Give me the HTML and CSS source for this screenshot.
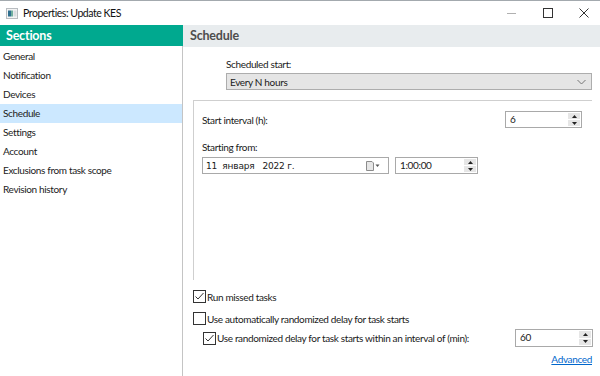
FILE: index.html
```html
<!DOCTYPE html>
<html>
<head>
<meta charset="utf-8">
<title>Properties: Update KES</title>
<link rel="stylesheet" href="styles.css">
</head>
<body>
<div class="window">
  <header class="titlebar">
    <svg class="appicon" width="12" height="11" viewBox="0 0 12 11">
      <rect x="0.5" y="0.5" width="11" height="10" fill="#f4f4f4" stroke="#b8bcc0"/>
      <rect x="2" y="2.5" width="3" height="6" fill="#2f6f8f"/>
      <rect x="5" y="2.5" width="2" height="6" fill="#6fae9e"/>
      <rect x="7.5" y="2.5" width="3" height="6" fill="#d9dde0"/>
    </svg>
    <span class="title">Properties: Update KES</span>
    <div class="controls">
      <span class="ctl"><svg width="10" height="10" viewBox="0 0 10 10"><line x1="0" y1="5.5" x2="9" y2="5.5" stroke="#b0b0b0" stroke-width="1"/></svg></span>
      <span class="ctl"><svg width="10" height="10" viewBox="0 0 10 10"><rect x="0.5" y="0.5" width="9" height="9" fill="none" stroke="#333" stroke-width="1"/></svg></span>
      <span class="ctl"><svg width="10" height="10" viewBox="0 0 10 10"><path d="M0.5 0.5 L9.5 9.5 M9.5 0.5 L0.5 9.5" stroke="#333" stroke-width="1"/></svg></span>
    </div>
  </header>
  <div class="main">
    <aside class="sidebar">
      <div class="sec-head">Sections</div>
      <ul class="nav">
        <li>General</li>
        <li>Notification</li>
        <li>Devices</li>
        <li class="active">Schedule</li>
        <li>Settings</li>
        <li>Account</li>
        <li>Exclusions from task scope</li>
        <li>Revision history</li>
      </ul>
    </aside>
    <section class="content">
      <div class="content-head">Schedule</div>
      <div class="sched">
        <div class="lbl">Scheduled start:</div>
        <div class="select">
          <span>Every N hours</span>
          <svg width="9" height="6" viewBox="0 0 9 6"><path d="M0.5 1 L4.5 5 L8.5 1" fill="none" stroke="#777" stroke-width="1"/></svg>
        </div>
      </div>
      <div class="group">
        <div class="row-between">
          <span class="lbl">Start interval (h):</span>
          <div class="spin spin-interval">
            <span class="val">6</span>
            <div class="btns">
              <span class="btn"><svg width="5" height="3" viewBox="0 0 5 3"><path d="M0 3 L2.5 0 L5 3Z" fill="#222"/></svg></span>
              <span class="btn"><svg width="5" height="3" viewBox="0 0 5 3"><path d="M0 0 L2.5 3 L5 0Z" fill="#222"/></svg></span>
            </div>
          </div>
        </div>
        <div class="lbl from">Starting from:</div>
        <div class="dt">
          <div class="date">
            <span class="val">11&nbsp;&nbsp;января&nbsp;&nbsp;&nbsp;2022&nbsp;г.</span>
            <span class="cal">
              <svg width="14" height="10" viewBox="0 0 14 10"><path d="M0.5 0.5 H6 L7.5 2 V9.5 H0.5 Z" fill="#e6e6e6" stroke="#8c8c8c"/><path d="M9.5 3.5 L11.5 6 L13.5 3.5Z" fill="#555"/></svg>
            </span>
          </div>
          <div class="spin spin-time">
            <span class="val">1:00:00</span>
            <div class="btns">
              <span class="btn"><svg width="5" height="3" viewBox="0 0 5 3"><path d="M0 3 L2.5 0 L5 3Z" fill="#222"/></svg></span>
              <span class="btn"><svg width="5" height="3" viewBox="0 0 5 3"><path d="M0 0 L2.5 3 L5 0Z" fill="#222"/></svg></span>
            </div>
          </div>
        </div>
      </div>
      <div class="checks">
        <label class="chk"><span class="box on"><svg width="11" height="11" viewBox="0 0 11 11"><path d="M1.5 5.5 L4 8 L9.5 2" fill="none" stroke="#333" stroke-width="1"/></svg></span>Run missed tasks</label>
        <label class="chk second"><span class="box"></span>Use automatically randomized delay for task starts</label>
        <div class="row-between third">
          <label class="chk"><span class="box on"><svg width="11" height="11" viewBox="0 0 11 11"><path d="M1.5 5.5 L4 8 L9.5 2" fill="none" stroke="#333" stroke-width="1"/></svg></span>Use randomized delay for task starts within an interval of (min):</label>
          <div class="spin spin-delay">
            <span class="val">60</span>
            <div class="btns">
              <span class="btn"><svg width="5" height="3" viewBox="0 0 5 3"><path d="M0 3 L2.5 0 L5 3Z" fill="#222"/></svg></span>
              <span class="btn"><svg width="5" height="3" viewBox="0 0 5 3"><path d="M0 0 L2.5 3 L5 0Z" fill="#222"/></svg></span>
            </div>
          </div>
        </div>
        <div class="adv"><a href="#">Advanced</a></div>
      </div>
    </section>
  </div>
</div>
</body>
</html>
```

FILE: styles.css
```css
* { box-sizing: border-box; }
html, body { margin: 0; padding: 0; }
body {
  width: 600px;
  height: 376px;
  overflow: hidden;
  background: #fff;
  font-family: "Lato", "Liberation Sans", sans-serif;
  font-size: 10px;
  letter-spacing: -0.35px;
  color: #1a1a1a;
}
.window { width: 600px; height: 376px; display: flex; flex-direction: column; }

.titlebar {
  height: 25px;
  border-top: 1px solid #a3a9ae;
  display: flex;
  align-items: center;
  padding-left: 6px;
  background: #fff;
}
.appicon { display: block; }
.title { margin-left: 5px; font-size: 10.5px; letter-spacing: -0.45px; color: #111; }
.controls { margin-left: auto; display: flex; height: 100%; }
.ctl { width: 36px; display: flex; align-items: center; justify-content: flex-end; padding-right: 11px; }
.ctl svg { display: block; }

.main { flex: 1; display: flex; min-height: 0; }
.sidebar { width: 183px; border-right: 1px solid #c4c4c4; background: #fff; }
.sec-head {
  height: 21px;
  background: #00a98f;
  color: #fff;
  font-weight: bold;
  font-size: 12.5px;
  letter-spacing: -0.2px;
  line-height: 21px;
  padding-left: 6px;
  margin-right: -1px;
}
.nav { list-style: none; margin: 0; padding: 1px 0 0; }
.nav li { height: 19px; line-height: 19px; padding-left: 3px; color: #222; }
.nav li.active { background: #cce8ff; }

.content { flex: 1; display: flex; flex-direction: column; }
.content-head {
  height: 22px;
  background: #e8ecee;
  color: #4d4d4d;
  font-weight: bold;
  font-size: 12.5px;
  letter-spacing: -0.2px;
  line-height: 22px;
  padding-left: 7px;
}
.sched { padding: 10px 8px 0 43px; }
.lbl { line-height: 14px; }
.select {
  margin-top: 2px;
  height: 17px;
  border: 1px solid #adadad;
  background: #e5e5e5;
  display: flex;
  align-items: center;
  justify-content: space-between;
  padding: 0 5px 0 3px;
}
.select svg { display: block; }

.group {
  margin: 10px 8px 0 10px;
  height: 180px;
  border-top: 1px solid #cfcfcf;
  border-left: 1px solid #cfcfcf;
  padding: 10px 10px 0 8px;
}
.row-between { display: flex; align-items: center; justify-content: space-between; }
.spin {
  height: 17px;
  border: 1px solid #a9a9a9;
  background: #fff;
  display: flex;
  align-items: stretch;
}
.spin .val { flex: 1; padding-left: 4px; line-height: 15px; }
.btns { width: 13px; display: flex; flex-direction: column; gap: 1px; padding: 1px 1px 1px 0; }
.btn { flex: 1; background: #e6e6e6; display: flex; align-items: center; justify-content: center; }
.btn svg { display: block; }
.spin-interval { width: 77px; }
.from { margin-top: 12px; }
.dt { display: flex; margin-top: 3px; gap: 6px; }
.date {
  width: 187px;
  height: 17px;
  border: 1px solid #a9a9a9;
  display: flex;
  align-items: center;
  justify-content: space-between;
  padding: 0 8px 0 3px;
}
.date .val { font-family: "DejaVu Sans", sans-serif; font-size: 9px; letter-spacing: -0.2px; }
.cal svg { display: block; }
.spin-time { width: 83px; }

.checks { padding: 9px 7px 0 10px; }
.chk { display: flex; align-items: center; height: 15px; gap: 1px; }
.box {
  width: 13px; height: 13px;
  border: 1px solid #333;
  background: #fff;
  display: flex; align-items: center; justify-content: center;
}
.box svg { display: block; }
.second { margin-top: 7px; }
.third { margin-top: 3px; padding-left: 10px; height: 18px; }
.spin-delay { width: 78px; height: 18px; }
.adv { margin-top: 5px; text-align: right; line-height: 14px; padding-right: 1px; }
.adv a { color: #0066cc; text-decoration: underline; }
```
